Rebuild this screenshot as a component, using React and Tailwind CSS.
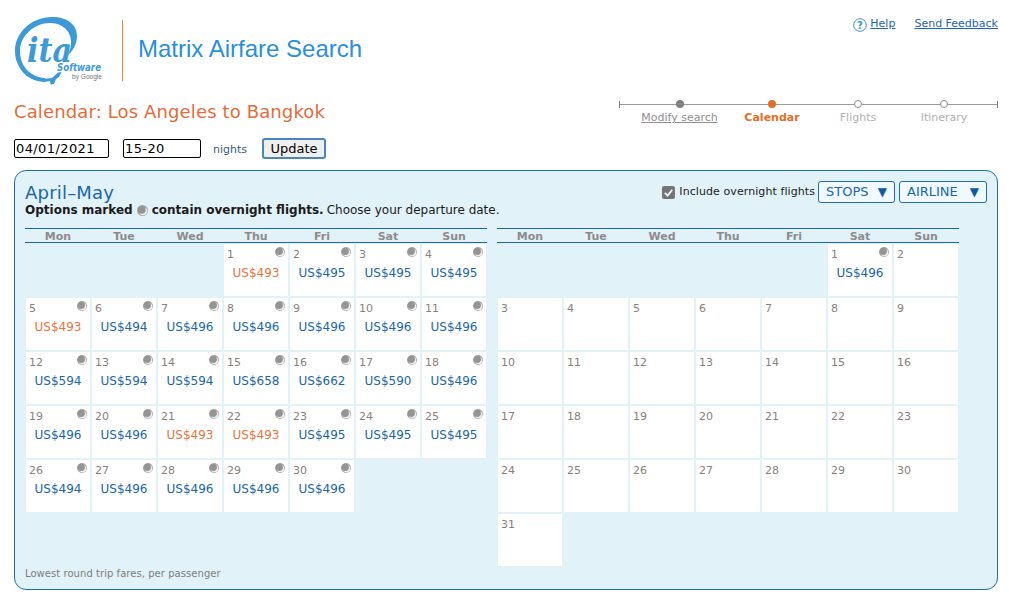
const april = [
  null, null, null,
  { d: 1, p: 493 }, { d: 2, p: 495 }, { d: 3, p: 495 }, { d: 4, p: 495 },
  { d: 5, p: 493 }, { d: 6, p: 494 }, { d: 7, p: 496 }, { d: 8, p: 496 }, { d: 9, p: 496 }, { d: 10, p: 496 }, { d: 11, p: 496 },
  { d: 12, p: 594 }, { d: 13, p: 594 }, { d: 14, p: 594 }, { d: 15, p: 658 }, { d: 16, p: 662 }, { d: 17, p: 590 }, { d: 18, p: 496 },
  { d: 19, p: 496 }, { d: 20, p: 496 }, { d: 21, p: 493 }, { d: 22, p: 493 }, { d: 23, p: 495 }, { d: 24, p: 495 }, { d: 25, p: 495 },
  { d: 26, p: 494 }, { d: 27, p: 496 }, { d: 28, p: 496 }, { d: 29, p: 496 }, { d: 30, p: 496 },
];

const may = [null, null, null, null, null, { d: 1, p: 496 }, { d: 2 }];
for (let d = 3; d <= 31; d++) may.push({ d });

const days = ["Mon", "Tue", "Wed", "Thu", "Fri", "Sat", "Sun"];

const Moon = ({ className }) => (
  <svg viewBox="0 0 10 10" className={className}>
    <circle cx="5" cy="5" r="5" fill="#a8a8a8" />
    <circle cx="5.5" cy="5.5" r="3.8" fill="#eeeeee" />
    <circle cx="4.3" cy="4.3" r="3.6" fill="#949494" />
  </svg>
);

const Logo = () => (
  <svg viewBox="0 0 90 70" className="w-[90px] h-[70px] overflow-visible">
    <path
      d="M31 67 C14 67 1 53 1 36 C1 17 18 2 38 2 C54 2 63 10 63 21 C63 29 59 36 53 41 C57 34 58 28 56 21 C53 12 45 8 36 8 C20 8 6 21 6 36 C6 51 16 62 31 63 Z"
      fill="#3d9ad9"
    />
    <path d="M28 64 L38 63 L44 57.5 L47.5 57 L45 62 L42 64 L40 69 L36.5 69.5 L36 66 L30 67 Z" fill="#3d9ad9" />
    <text x="13" y="47" fontFamily="'DejaVu Serif', serif" fontStyle="italic" fontWeight="700" fontSize="34" fill="#3d9ad9" textLength="45" lengthAdjust="spacingAndGlyphs">
      ita
    </text>
    <text x="43" y="56" fontFamily="'DejaVu Sans', sans-serif" fontStyle="italic" fontWeight="700" fontSize="10.5" fill="#3d9ad9" textLength="44" lengthAdjust="spacingAndGlyphs">
      Software
    </text>
    <text x="58" y="63.5" fontFamily="'Liberation Sans', sans-serif" fontSize="6.5" fill="#777" textLength="30" lengthAdjust="spacingAndGlyphs">
      by Google
    </text>
  </svg>
);

const Cell = ({ cell }) => {
  if (!cell) return <div className="h-[52px]" />;
  const cheap = cell.p === 493;
  return (
    <div className="relative h-[52px] bg-white pl-[3px] pt-[4px]">
      <div className="text-[11px] leading-[14px] text-[#8a7f7a]">{cell.d}</div>
      {cell.p && (
        <>
          <Moon className="absolute top-[3px] right-[3px] w-[10px] h-[10px]" />
          <div className={`mt-[2px] -ml-[3px] text-center text-[12px] leading-[18px] ${cheap ? "text-[#e8743b]" : "text-[#1a66a8]"}`}>
            US${cell.p}
          </div>
        </>
      )}
    </div>
  );
};

const Month = ({ cells }) => (
  <div className="w-[462px]">
    <div className="grid grid-cols-[repeat(7,66px)] h-[15px] border-t border-b border-[#1a66b0]">
      {days.map((d) => (
        <div key={d} className="text-center text-[11px] leading-[15px] font-bold text-[#8c8c8c]">
          {d}
        </div>
      ))}
    </div>
    <div className="grid grid-cols-[repeat(7,64px)] gap-0.5 pl-px mt-px">
      {cells.map((c, i) => (
        <Cell key={i} cell={c} />
      ))}
    </div>
  </div>
);

const steps = [
  { label: "Modify search", w: "w-[121px]", text: "text-[#8f8f8f] underline", dot: "bg-[#808080]" },
  { label: "Calendar", w: "w-[64px]", text: "text-[#e56f27] font-bold", dot: "bg-[#e56f27]" },
  { label: "Flights", w: "w-[108px]", text: "text-[#b0b0b0]", dot: "bg-white border border-[#8f8f8f]" },
  { label: "Itinerary", w: "w-[64px]", text: "text-[#b0b0b0]", dot: "bg-white border border-[#8f8f8f]" },
];

const Timeline = () => (
  <div className="relative w-[379px] h-[25px]">
    <div className="absolute left-0 right-0 top-[4px] h-px bg-[#9a9a9a]" />
    <div className="absolute left-0 top-px w-px h-[7px] bg-[#808080]" />
    <div className="absolute right-0 top-px w-px h-[7px] bg-[#808080]" />
    <div className="flex">
      {steps.map((s) => (
        <div key={s.label} className={`relative ${s.w} flex flex-col items-center`}>
          <div className={`w-[8px] h-[8px] rounded-full ${s.dot} z-10`} />
          <div className={`whitespace-nowrap text-[11px] leading-[14px] mt-[3px] ${s.text}`}>{s.label}</div>
        </div>
      ))}
    </div>
  </div>
);

export default function App() {
  return (
    <div className="relative w-[1009px] h-[598px] overflow-hidden bg-white font-['DejaVu_Sans',sans-serif]">
      <div className="flex justify-between pl-[14px] pr-[11px] pt-[15px] h-[85px]">
        <div className="flex items-start">
          <Logo />
          <div className="ml-[18px] mt-[5px] w-px h-[61px] bg-[#f08a3c]" />
          <div className="ml-[15px] mt-[18px] font-['Liberation_Sans',sans-serif] text-[24px] leading-[32px] text-[#2a8fdc]">
            Matrix Airfare Search
          </div>
        </div>
        <div className="flex items-center h-[18px] text-[11px] text-[#1a66b0]">
          <svg viewBox="0 0 14 14" className="w-[14px] h-[14px] mr-[3px] mt-px">
            <circle cx="7" cy="7" r="6.3" fill="none" stroke="#3d8fd0" strokeWidth="1" />
            <text x="7" y="10.5" textAnchor="middle" fontSize="10" fontWeight="700" fill="#3d8fd0">?</text>
          </svg>
          <span className="underline">Help</span>
          <span className="underline ml-[19px]">Send Feedback</span>
        </div>
      </div>

      <div className="flex justify-between pl-[14px] pr-[11px]">
        <div className="pt-[15px]">
          <div className="text-[18px] leading-[24px] tracking-[0.13px] text-[#e46c3a]">Calendar: Los Angeles to Bangkok</div>
          <div className="flex items-center mt-[14px]">
            <input
              readOnly
              value="04/01/2021"
              className="w-[95px] h-[19px] px-px bg-white border border-black rounded-[2px] text-[13px] tracking-[0.4px] text-black"
            />
            <input
              readOnly
              value="15-20"
              className="ml-[14px] w-[78px] h-[19px] px-px bg-white border border-black rounded-[2px] text-[13px] tracking-[0.4px] text-black"
            />
            <span className="ml-[12px] mt-[3px] text-[11px] text-[#3b5a70]">nights</span>
            <button className="ml-[15px] w-[64px] h-[21px] rounded-[3px] border-2 border-[#4a86bd] bg-[#efefef] text-[13px] leading-[15px] text-black">
              Update
            </button>
          </div>
        </div>
        <div className="pt-[15px]">
          <Timeline />
        </div>
      </div>

      <div className="relative mx-[14px] mt-[11px] w-[984px] h-[420px] bg-[#e1f2f9] border border-[#1f6db5] rounded-[12px] px-[10px]">
        <div className="flex justify-between">
          <div>
            <div className="pt-[12px] text-[18px] leading-[20px] tracking-[0.2px] text-[#1a66a8]">April–May</div>
            <div className="flex items-center text-[12px] leading-[15px] text-[#1a1a1a]">
              <span className="font-bold">Options marked</span>
              <Moon className="w-[11px] h-[11px] mx-[4px]" />
              <span className="font-bold">contain overnight flights.</span>
              <span className="ml-[3px]">Choose your departure date.</span>
            </div>
          </div>
          <div className="flex items-start pt-[10px] text-[11px] text-[#222]">
            <div className="flex items-center h-[22px] gap-[4px]">
              <div className="flex items-center justify-center w-[13px] h-[13px] rounded-[2px] bg-[#757575]">
                <svg viewBox="0 0 12 12" className="w-[11px] h-[11px]">
                  <path d="M2 6.5 L5 9.5 L10 3" fill="none" stroke="#fff" strokeWidth="2" />
                </svg>
              </div>
              <span className="tracking-[0.08px]">Include overnight flights</span>
            </div>
            <div className="ml-[3px] flex items-center justify-between w-[77px] h-[22px] px-[7px] bg-[#f0f9fd] border border-[#1f6db5] rounded-[3px] text-[13px] text-[#1a66a8]">
              <span>STOPS</span>
              <span className="text-[12px] text-[#0f5ba3]">▼</span>
            </div>
            <div className="ml-[4px] flex items-center justify-between w-[88px] h-[22px] px-[7px] bg-[#f0f9fd] border border-[#1f6db5] rounded-[3px] text-[13px] text-[#1a66a8]">
              <span>AIRLINE</span>
              <span className="text-[12px] text-[#0f5ba3]">▼</span>
            </div>
          </div>
        </div>

        <div className="flex gap-[10px] mt-[10px]">
          <Month cells={april} />
          <Month cells={may} />
        </div>

        <div className="absolute left-[10px] bottom-[9px] text-[10px] leading-[12px] tracking-[0.05px] text-[#7d7d7d]">
          Lowest round trip fares, per passenger
        </div>
      </div>
    </div>
  );
}
